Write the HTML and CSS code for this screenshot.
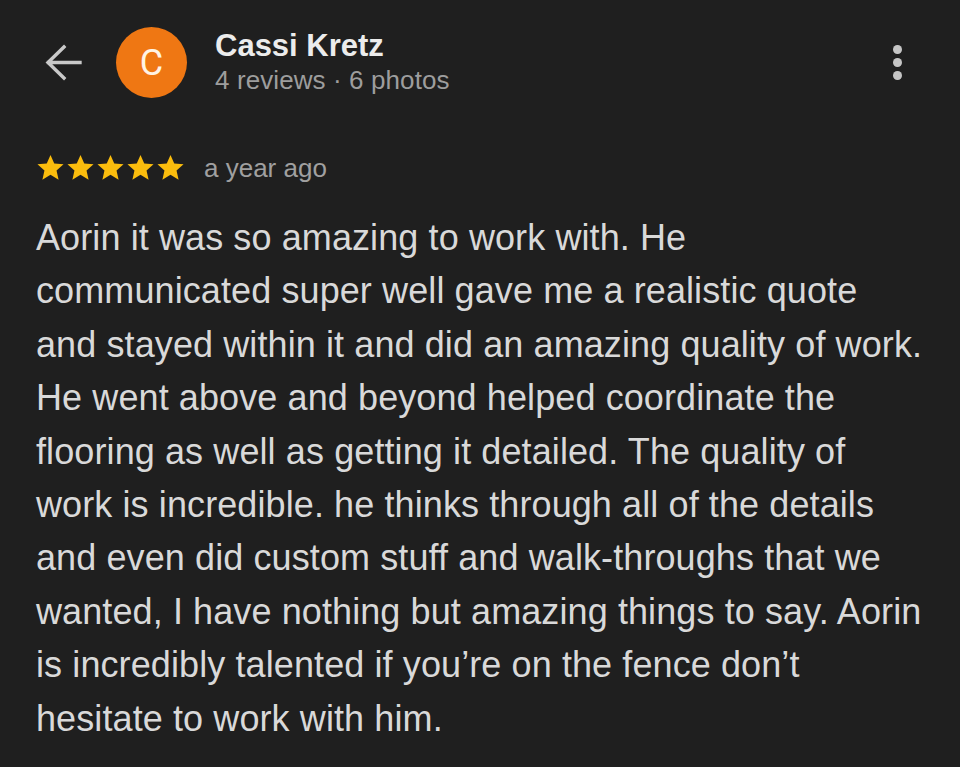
FILE: index.html
```html
<!DOCTYPE html>
<html lang="en">
<head>
<meta charset="utf-8">
<title>Review</title>
<link rel="stylesheet" href="styles.css">
</head>
<body>
<div class="page">
  <header class="header">
    <button class="back" aria-label="Back">
      <svg width="38" height="38" viewBox="0 0 38 38"><path d="M36 18.5H4.5M20 3L4 18.5L20 34" fill="none" stroke="#c9c9c9" stroke-width="3.4" stroke-linecap="square" stroke-linejoin="miter"/></svg>
    </button>
    <div class="avatar">C</div>
    <div class="who">
      <div class="name">Cassi Kretz</div>
      <div class="meta">4 reviews · 6 photos</div>
    </div>
    <button class="more" aria-label="More options">
      <span class="dot"></span><span class="dot"></span><span class="dot"></span>
    </button>
  </header>
  <div class="rating">
    <div class="stars">
      <svg class="star" viewBox="0 0 24 24"><path d="M12 1.6l3.1 7.1 7.7.7-5.8 5.1 1.7 7.6L12 18.1l-6.7 4 1.7-7.6L1.2 9.4l7.7-.7z"/></svg>
      <svg class="star" viewBox="0 0 24 24"><path d="M12 1.6l3.1 7.1 7.7.7-5.8 5.1 1.7 7.6L12 18.1l-6.7 4 1.7-7.6L1.2 9.4l7.7-.7z"/></svg>
      <svg class="star" viewBox="0 0 24 24"><path d="M12 1.6l3.1 7.1 7.7.7-5.8 5.1 1.7 7.6L12 18.1l-6.7 4 1.7-7.6L1.2 9.4l7.7-.7z"/></svg>
      <svg class="star" viewBox="0 0 24 24"><path d="M12 1.6l3.1 7.1 7.7.7-5.8 5.1 1.7 7.6L12 18.1l-6.7 4 1.7-7.6L1.2 9.4l7.7-.7z"/></svg>
      <svg class="star" viewBox="0 0 24 24"><path d="M12 1.6l3.1 7.1 7.7.7-5.8 5.1 1.7 7.6L12 18.1l-6.7 4 1.7-7.6L1.2 9.4l7.7-.7z"/></svg>
    </div>
    <span class="when">a year ago</span>
  </div>
  <p class="review">Aorin it was so amazing to work with. He<br>communicated super well gave me a realistic quote<br>and stayed within it and did an amazing quality of work.<br>He went above and beyond helped coordinate the<br>flooring as well as getting it detailed. The quality of<br>work is incredible. he thinks through all of the details<br>and even did custom stuff and walk-throughs that we<br>wanted, I have nothing but amazing things to say. Aorin<br>is incredibly talented if you’re on the fence don’t<br>hesitate to work with him.</p>
</div>
</body>
</html>
```

FILE: styles.css
```css
html, body {
  margin: 0;
  padding: 0;
  background: #1f1f1f;
}
body {
  width: 960px;
  height: 767px;
  overflow: hidden;
  font-family: "Liberation Sans", Arial, sans-serif;
}
.page {
  padding: 27px 0 0 36px;
}
.header {
  display: flex;
  align-items: center;
  height: 71px;
}
.back {
  background: none;
  border: 0;
  padding: 0;
  margin: 0 0 0 8px;
  width: 38px;
  height: 38px;
  display: flex;
}
.avatar {
  width: 71px;
  height: 71px;
  border-radius: 50%;
  background: #ef7713;
  color: #fff3e4;
  font-family: Roboto, "Liberation Sans", sans-serif;
  font-size: 36px;
  display: flex;
  align-items: center;
  justify-content: center;
  margin-left: 34px;
}
.who {
  margin-left: 28px;
  flex: 1;
  display: flex;
  flex-direction: column;
}
.name {
  color: #ececec;
  font-weight: bold;
  font-size: 31px;
  line-height: 35px;
}
.meta {
  color: #9d9d9d;
  font-size: 26px;
  line-height: 35px;
  letter-spacing: 0.1px;
}
.more {
  background: none;
  border: 0;
  padding: 0;
  margin-right: 58px;
  display: flex;
  flex-direction: column;
  gap: 4.6px;
}
.dot {
  width: 8.8px;
  height: 8.8px;
  border-radius: 50%;
  background: #c5c5c5;
}
.rating {
  display: flex;
  align-items: center;
  margin-top: 55px;
  height: 28px;
}
.stars {
  display: flex;
  gap: 1px;
}
.star {
  width: 29px;
  height: 29px;
  fill: #fbbd0d;
}
.when {
  color: #a0a0a0;
  font-size: 26px;
  line-height: 28px;
  margin-left: 19px;
  position: relative;
  top: 1px;
}
.review {
  margin: 30px 0 0 0;
  color: #d9d9d9;
  font-size: 36px;
  line-height: 53.4px;
  letter-spacing: 0.1px;
  white-space: nowrap;
}
```
